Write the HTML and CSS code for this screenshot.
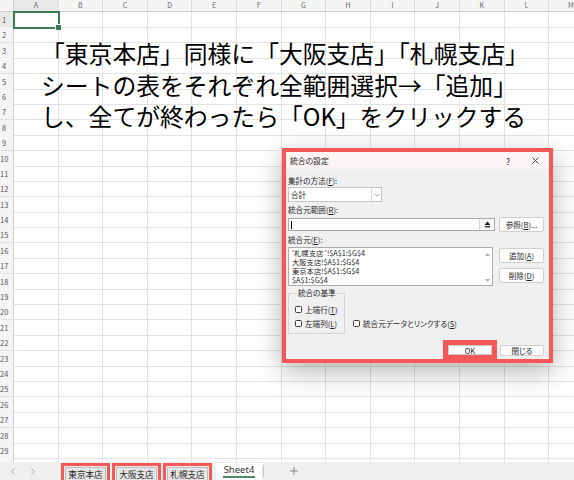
FILE: index.html
```html
<!DOCTYPE html>
<html lang="ja">
<head>
<meta charset="utf-8">
<title>統合の設定</title>
<link rel="stylesheet" href="styles.css">
</head>
<body>
<div class="app">
  <div class="sheet">
    <div class="colhdr"><b></b><span class="cur">A</span><span>B</span><span>C</span><span>D</span><span>E</span><span>F</span><span>G</span><span>H</span><span>I</span><span>J</span><span>K</span><span>L</span><span>M</span></div>
    <div class="r"><b class="cur">1</b><i class="a1"></i><i></i><i></i><i></i><i></i><i></i><i></i><i></i><i></i><i></i><i></i><i></i><i></i></div>
    <div class="r"><b>2</b><i></i><i></i><i></i><i></i><i></i><i></i><i></i><i></i><i></i><i></i><i></i><i></i><i></i></div>
    <div class="r"><b>3</b><i></i><i></i><i></i><i></i><i></i><i></i><i></i><i></i><i></i><i></i><i></i><i></i><i></i></div>
    <div class="r"><b>4</b><i></i><i></i><i></i><i></i><i></i><i></i><i></i><i></i><i></i><i></i><i></i><i></i><i></i></div>
    <div class="r"><b>5</b><i></i><i></i><i></i><i></i><i></i><i></i><i></i><i></i><i></i><i></i><i></i><i></i><i></i></div>
    <div class="r"><b>6</b><i></i><i></i><i></i><i></i><i></i><i></i><i></i><i></i><i></i><i></i><i></i><i></i><i></i></div>
    <div class="r"><b>7</b><i></i><i></i><i></i><i></i><i></i><i></i><i></i><i></i><i></i><i></i><i></i><i></i><i></i></div>
    <div class="r"><b>8</b><i></i><i></i><i></i><i></i><i></i><i></i><i></i><i></i><i></i><i></i><i></i><i></i><i></i></div>
    <div class="r"><b>9</b><i></i><i></i><i></i><i></i><i></i><i></i><i></i><i></i><i></i><i></i><i></i><i></i><i></i></div>
    <div class="r"><b>10</b><i></i><i></i><i></i><i></i><i></i><i></i><i></i><i></i><i></i><i></i><i></i><i></i><i></i></div>
    <div class="r"><b>11</b><i></i><i></i><i></i><i></i><i></i><i></i><i></i><i></i><i></i><i></i><i></i><i></i><i></i></div>
    <div class="r"><b>12</b><i></i><i></i><i></i><i></i><i></i><i></i><i></i><i></i><i></i><i></i><i></i><i></i><i></i></div>
    <div class="r"><b>13</b><i></i><i></i><i></i><i></i><i></i><i></i><i></i><i></i><i></i><i></i><i></i><i></i><i></i></div>
    <div class="r"><b>14</b><i></i><i></i><i></i><i></i><i></i><i></i><i></i><i></i><i></i><i></i><i></i><i></i><i></i></div>
    <div class="r"><b>15</b><i></i><i></i><i></i><i></i><i></i><i></i><i></i><i></i><i></i><i></i><i></i><i></i><i></i></div>
    <div class="r"><b>16</b><i></i><i></i><i></i><i></i><i></i><i></i><i></i><i></i><i></i><i></i><i></i><i></i><i></i></div>
    <div class="r"><b>17</b><i></i><i></i><i></i><i></i><i></i><i></i><i></i><i></i><i></i><i></i><i></i><i></i><i></i></div>
    <div class="r"><b>18</b><i></i><i></i><i></i><i></i><i></i><i></i><i></i><i></i><i></i><i></i><i></i><i></i><i></i></div>
    <div class="r"><b>19</b><i></i><i></i><i></i><i></i><i></i><i></i><i></i><i></i><i></i><i></i><i></i><i></i><i></i></div>
    <div class="r"><b>20</b><i></i><i></i><i></i><i></i><i></i><i></i><i></i><i></i><i></i><i></i><i></i><i></i><i></i></div>
    <div class="r"><b>21</b><i></i><i></i><i></i><i></i><i></i><i></i><i></i><i></i><i></i><i></i><i></i><i></i><i></i></div>
    <div class="r"><b>22</b><i></i><i></i><i></i><i></i><i></i><i></i><i></i><i></i><i></i><i></i><i></i><i></i><i></i></div>
    <div class="r"><b>23</b><i></i><i></i><i></i><i></i><i></i><i></i><i></i><i></i><i></i><i></i><i></i><i></i><i></i></div>
    <div class="r"><b>24</b><i></i><i></i><i></i><i></i><i></i><i></i><i></i><i></i><i></i><i></i><i></i><i></i><i></i></div>
    <div class="r"><b>25</b><i></i><i></i><i></i><i></i><i></i><i></i><i></i><i></i><i></i><i></i><i></i><i></i><i></i></div>
    <div class="r"><b>26</b><i></i><i></i><i></i><i></i><i></i><i></i><i></i><i></i><i></i><i></i><i></i><i></i><i></i></div>
    <div class="r"><b>27</b><i></i><i></i><i></i><i></i><i></i><i></i><i></i><i></i><i></i><i></i><i></i><i></i><i></i></div>
    <div class="r"><b>28</b><i></i><i></i><i></i><i></i><i></i><i></i><i></i><i></i><i></i><i></i><i></i><i></i><i></i></div>
    <div class="r"><b>29</b><i></i><i></i><i></i><i></i><i></i><i></i><i></i><i></i><i></i><i></i><i></i><i></i><i></i></div>
    <div class="r"><b></b><i></i><i></i><i></i><i></i><i></i><i></i><i></i><i></i><i></i><i></i><i></i><i></i><i></i></div>
  </div>

  <div class="note">
    <div>「東京本店」同様に「大阪支店」「札幌支店」</div>
    <div>シートの表をそれぞれ全範囲選択→「追加」</div>
    <div>し、全てが終わったら「OK」をクリックする</div>
  </div>

  <div class="dlg">
    <div class="ttl">
      <span class="ttl-t">統合の設定</span>
      <span class="help">?</span>
      <svg class="x" viewBox="0 0 7 7"><path d="M0.5 0.5L6.5 6.5M6.5 0.5L0.5 6.5" stroke="#333" stroke-width="0.9" fill="none"/></svg>
    </div>
    <div class="body">
      <div class="lbl">集計の方法(<u>F</u>):</div>
      <div class="sel"><span class="v">合計</span><span class="dd"><svg width="6" height="4" viewBox="0 0 6 4"><path d="M0.5 0.8L3 3.2L5.5 0.8" stroke="#8a8a8a" stroke-width="0.8" fill="none"/></svg></span></div>
      <div class="lbl gap">統合元範囲(<u>R</u>):</div>
      <div class="line">
        <div class="inp"><span class="caret"></span><span class="col"><svg width="7" height="7" viewBox="0 0 7 7"><path d="M3.5 0.5L6.3 4H0.7Z" fill="#111"/><rect x="0.8" y="5.2" width="5.4" height="1.2" fill="#111"/></svg></span></div>
        <div class="btn ref">参照(<u>B</u>)...</div>
      </div>
      <div class="lbl gap">統合元(<u>E</u>):</div>
      <div class="line">
        <div class="list">
          <div class="items">
            <div>'札幌支店 '!$A$1:$G$4</div>
            <div>大阪支店!$A$1:$G$4</div>
            <div>東京本店!$A$1:$G$4</div>
            <div>$A$1:$G$4</div>
          </div>
          <div class="sb">
            <svg width="5" height="3" viewBox="0 0 5 3"><path d="M2.5 0L5 3H0Z" fill="#b4b4b4"/></svg>
            <svg width="5" height="3" viewBox="0 0 5 3"><path d="M0 0H5L2.5 3Z" fill="#b4b4b4"/></svg>
          </div>
        </div>
        <div class="btns">
          <div class="btn">追加(<u>A</u>)</div>
          <div class="btn">削除(<u>D</u>)</div>
        </div>
      </div>
      <div class="opts">
        <fieldset class="grp">
          <legend>統合の基準</legend>
          <label class="chk"><i></i>上端行(<u>T</u>)</label>
          <label class="chk"><i></i>左端列(<u>L</u>)</label>
        </fieldset>
        <label class="chk link"><i></i>統合元データとリンクする(<u>S</u>)</label>
      </div>
      <div class="foot">
        <div class="okhl"><div class="btn ok">OK</div></div>
        <div class="btn close">閉じる</div>
      </div>
    </div>
  </div>

  <div class="tabs">
    <div class="nav">
      <svg width="4" height="7" viewBox="0 0 4 7"><path d="M3.5 0.5L0.7 3.5L3.5 6.5" stroke="#a0a0a0" stroke-width="0.9" fill="none"/></svg>
      <svg width="4" height="7" viewBox="0 0 4 7"><path d="M0.5 0.5L3.3 3.5L0.5 6.5" stroke="#a0a0a0" stroke-width="0.9" fill="none"/></svg>
    </div>
    <div class="hl"><div class="tab">東京本店</div></div>
    <div class="hl"><div class="tab">大阪支店</div></div>
    <div class="hl"><div class="tab">札幌支店</div></div>
    <div class="active"><span>Sheet4</span></div>
    <div class="sep"></div>
    <svg class="plus" width="8" height="8" viewBox="0 0 8 8"><path d="M4 0V8M0 4H8" stroke="#7a7a7a" stroke-width="0.9" fill="none"/></svg>
  </div>
</div>
</body>
</html>
```
FILE: styles.css
```css
* { box-sizing: border-box; }
html, body { margin: 0; padding: 0; }
body {
  width: 574px;
  height: 480px;
  overflow: hidden;
  background: #fff;
  font-family: "Noto Sans CJK JP", "Noto Sans", sans-serif;
  color: #222;
}
.app { position: relative; width: 574px; height: 480px; overflow: hidden; }

/* spreadsheet grid */
.sheet { height: 462px; overflow: hidden; }
.colhdr, .r {
  display: grid;
  grid-template-columns: 14px repeat(13, 44.6px);
}
.colhdr {
  height: 12px;
  background: #f5f5f5;
  border-bottom: 1px solid #cdcdcd;
}
.colhdr b { border-right: 1px solid #cdcdcd; }
.colhdr span {
  font-size: 7px;
  line-height: 11px;
  color: #666;
  text-align: center;
  border-right: 1px solid #dedede;
}
.colhdr .cur { background: #e8e8e8; }
.r { height: 15.4px; }
.r b {
  font-weight: normal;
  font-size: 7.5px;
  line-height: 15px;
  color: #555;
  text-align: center;
  padding-right: 5px;
  background: #f5f5f5;
  border-right: 1px solid #cdcdcd;
  border-bottom: 1px solid #e0e0e0;
}
.r b.cur { background: #e8e8e8; }
.r i {
  border-right: 1px solid #e2e2e2;
  border-bottom: 1px solid #e2e2e2;
}
.r i.a1 { position: relative; }
.a1::after {
  content: "";
  position: absolute;
  left: -1px; top: -1px; right: -2px; bottom: -2px;
  border: 2px solid #3c7a52;
}
.a1::before {
  content: "";
  position: absolute;
  right: -4px; bottom: -4px;
  width: 5px; height: 5px;
  background: #3c7a52;
  border: 1px solid #fff;
  z-index: 1;
}

/* instruction text */
.note {
  position: absolute;
  left: 41px;
  top: 37px;
  font-size: 23.8px;
  line-height: 31.5px;
  color: #000;
  white-space: nowrap;
}

/* dialog */
.dlg {
  position: absolute;
  left: 282px;
  top: 148px;
  width: 271px;
  height: 215px;
  border: 4px solid #f65858;
  background: #f0f0f0;
  box-shadow: 0 8px 26px rgba(0, 0, 0, 0.3);
  font-size: 7.6px;
  color: #1e1e1e;
  font-feature-settings: "palt";
}
.ttl {
  height: 17px;
  display: flex;
  align-items: center;
  padding-left: 4px;
  background: #f9f5f4;
}
.ttl-t { flex: 1; font-size: 7.8px; }
.help { width: 10px; text-align: center; margin-right: 19px; font-size: 8.5px; }
.x { width: 7px; height: 7px; margin-right: 10px; }
.body { padding: 7px 5px 0 2px; }
.lbl { height: 10px; line-height: 10px; white-space: nowrap; }
.lbl.gap { margin-top: 3px; }
.sel {
  margin-top: 1px;
  width: 94px;
  height: 15px;
  background: #fff;
  border: 1px solid #c4c4c4;
  display: flex;
  align-items: center;
}
.sel .v { flex: 1; padding-left: 2px; }
.dd {
  width: 10px;
  height: 100%;
  border-left: 1px solid #d8d8d8;
  display: flex;
  align-items: center;
  justify-content: center;
}
.line { margin-top: 2px; display: flex; align-items: flex-start; }
.inp {
  margin-top: 1px;
  width: 207px;
  height: 13px;
  background: #fff;
  border: 1px solid #a9a9a9;
  display: flex;
  align-items: center;
}
.caret { width: 1px; height: 8px; background: #000; margin-left: 2px; }
.col {
  margin-left: auto;
  width: 15px;
  height: 100%;
  border-left: 1px solid #d4d4d4;
  display: flex;
  align-items: center;
  justify-content: center;
  background: #fafafa;
}
.btn {
  background: #fdfdfd;
  border: 1px solid #cfcfcf;
  border-radius: 2px;
  display: flex;
  align-items: center;
  justify-content: center;
  white-space: nowrap;
}
.btn.ref { margin-left: 4px; width: 45px; height: 15px; }
.list {
  width: 205px;
  height: 39px;
  background: #fff;
  border: 1px solid #adadad;
  display: flex;
}
.items { flex: 1; padding: 1px 0 0 3px; font-size: 7.3px; line-height: 9px; white-space: nowrap; }
.items div { height: 9px; }
.sb {
  width: 10px;
  display: flex;
  flex-direction: column;
  justify-content: space-between;
  align-items: center;
  padding: 5px 0 3px;
}
.sb svg { display: block; }
.btns { margin-left: 6px; display: flex; flex-direction: column; gap: 5px; padding-top: 1px; }
.btns .btn { width: 45px; height: 15px; }
.opts { margin-top: 2px; display: flex; align-items: flex-end; }
fieldset.grp {
  margin: 0;
  width: 57px;
  border: 1px solid #d5d5d5;
  border-radius: 1px;
  padding: 4px 0 3px 6px;
}
.grp legend { padding: 0 1px; margin-left: 2px; line-height: 10px; font-size: 7.6px; }
.chk { display: flex; align-items: center; height: 14px; white-space: nowrap; }
.chk i {
  width: 7px;
  height: 7px;
  border: 1px solid #3a3a3a;
  border-radius: 1.5px;
  background: #fff;
  margin-right: 3px;
  flex: none;
}
.chk.link { margin-left: 8px; margin-bottom: 4px; }
.foot { margin-top: 6px; display: flex; justify-content: flex-end; align-items: flex-start; }
.okhl {
  width: 54px;
  height: 19px;
  border: 5px solid #f65858;
  border-bottom-width: 4px;
}
.btn.ok { width: 100%; height: 100%; background: #fff; border-color: #c8c8c8; border-radius: 1px; }
.btn.close { margin-left: 3px; margin-top: 5px; width: 44px; height: 11px; }

/* sheet tabs */
.tabs {
  height: 18px;
  background: #efefef;
  display: flex;
  align-items: flex-end;
}
.nav {
  align-self: stretch;
  width: 61px;
  display: flex;
  align-items: center;
  gap: 16px;
  padding-left: 11px;
}
.hl {
  width: 49px;
  height: 17px;
  border: 3px solid #f65858;
  border-bottom: 0;
  padding: 1px 1px 0;
}
.hl + .hl { margin-left: 2px; }
.tab {
  height: 100%;
  background: #e6e6e6;
  border: 1px solid #bdbdbd;
  border-bottom: 0;
  font-size: 8.6px;
  line-height: 12px;
  text-align: center;
  color: #222;
}
.active {
  margin-left: 4px;
  width: 46px;
  height: 17px;
  background: #fff;
  text-align: center;
  font-family: "Noto Sans", sans-serif;
  font-size: 9.5px;
  line-height: 13px;
  color: #333;
}
.active span { display: inline-block; border-bottom: 2px solid #4f8a64; padding: 0 1px; line-height: 12px; }
.sep { width: 1px; height: 12px; background: #c4c4c4; align-self: center; margin-left: 1px; }
.plus { margin-left: 26px; align-self: center; }
```
